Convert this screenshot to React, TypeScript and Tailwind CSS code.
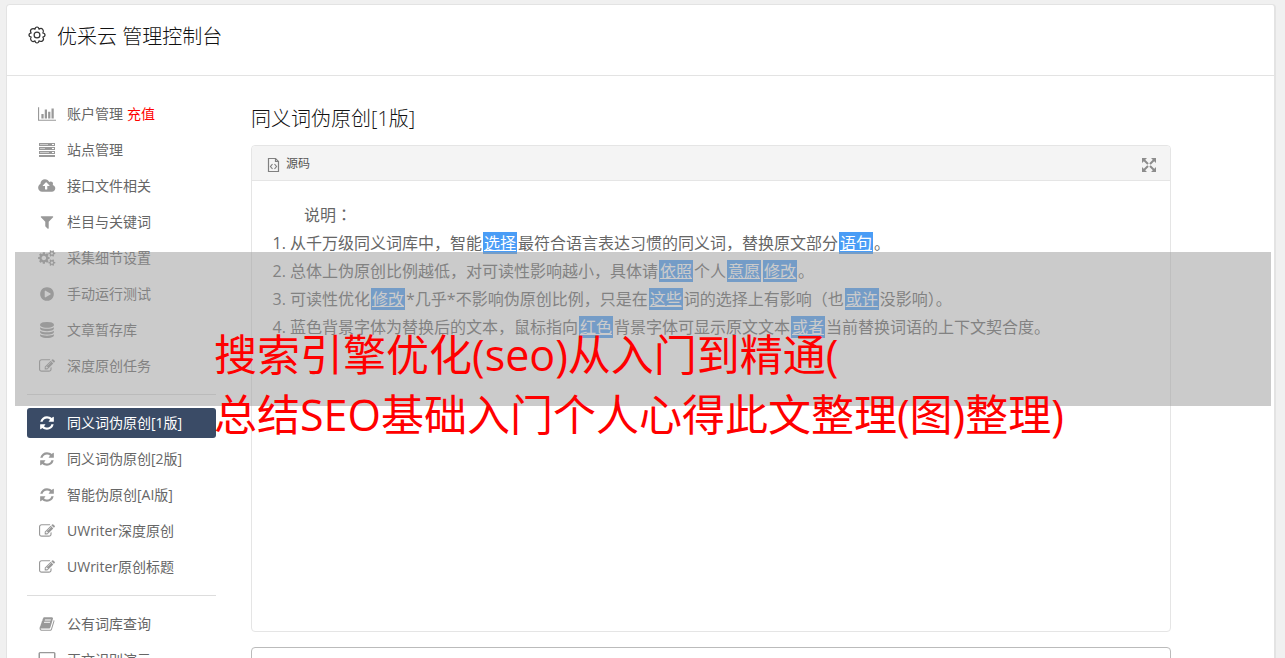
import type { ReactNode } from "react";
import clsx from "clsx";

type IconName =
  | "chart"
  | "server"
  | "upload"
  | "filter"
  | "cogs"
  | "play"
  | "database"
  | "edit"
  | "refresh"
  | "book"
  | "laptop";

const icons: Record<IconName, { box: string; width: string; path: string }> = {
  chart: {
    box: "0 0 2048 1792",
    width: "w-[18px]",
    path: "M640 896v512h-256v-512h256zm384-512v1024h-256v-1024h256zm1024 1152v128h-2048v-1536h128v1408h1920zm-640-896v768h-256v-768h256zm384-384v1152h-256v-1152h256z",
  },
  server: {
    box: "0 0 18 16",
    width: "w-[18px]",
    path: "M1 1h16v3H1zM1 5h16v3H1zM1 9h16v3H1zM1 13h16v2H1zM2 2.200v.6h8v-.6zM2 6.200v.6h5v-.6zM2 10.200v.6h9v-.6zM14 2v1h2V2zM14 6v1h2V6zM14 10v1h2v-1z",
  },
  upload: {
    box: "0 0 1856 1792",
    width: "w-[18px]",
    path: "M1216 864q0-14-9-23l-352-352q-9-9-23-9t-23 9l-351 351q-10 12-10 24 0 14 9 23t23 9h224v352q0 13 9.5 22.5t22.5 9.5h192q13 0 22.5-9.5t9.5-22.5v-352h224q13 0 22.5-9.5t9.5-22.5zm640 288q0 159-112.5 271.5t-271.5 112.5h-1088q-185 0-316.5-131.5t-131.5-316.5q0-130 70-240t188-165q-2-30-2-43 0-212 150-362t362-150q156 0 285.5 87t188.5 231q71-62 166-62 106 0 181 75t75 181q0 76-41 138 130 31 213.5 135.5t83.5 238.5z",
  },
  filter: {
    box: "0 0 1792 1792",
    width: "w-4",
    path: "M1595 295q17 41-14 70l-493 493v742q0 42-39 59-13 5-25 5-27 0-45-19l-256-256q-19-19-19-45v-486l-493-493q-31-29-14-70 17-39 59-39h1280q42 0 59 39z",
  },
  cogs: {
    box: "0 0 1856 1792",
    width: "w-[18px]",
    path: "M832 896q0-106-75-181t-181-75-181 75-75 181 75 181 181 75 181-75 75-181zm768 512q0-52-38-90t-90-38-90 38-38 90q0 53 37.5 90.5t90.5 37.5 90.5-37.5 37.5-90.5zm0-1024q0-52-38-90t-90-38-90 38-38 90q0 53 37.5 90.5t90.5 37.5 90.5-37.5 37.5-90.5zm-384 421v185q0 10-7 19.5t-16 10.5l-155 24q-11 35-32 76 34 48 90 115 7 11 7 20 0 12-7 19-23 30-82.5 89.5t-78.5 59.5q-11 0-21-7l-115-90q-37 19-77 31-11 108-23 155-7 24-30 24h-186q-11 0-20-7.5t-10-17.5l-23-153q-34-10-75-31l-118 89q-7 7-20 7-11 0-21-8-144-133-144-160 0-9 7-19 10-14 41-53t47-61q-23-44-35-82l-152-24q-10-1-17-9.5t-7-19.5v-185q0-10 7-19.5t16-10.5l155-24q11-35 32-76-34-48-90-115-7-11-7-20 0-12 7-20 22-30 82-89t79-59q11 0 21 7l115 90q34-18 77-32 11-108 23-154 7-24 30-24h186q11 0 20 7.5t10 17.5l23 153q34 10 75 31l118-89q8-7 20-7 11 0 21 8 144 133 144 160 0 8-7 19-12 16-42 54t-45 60q23 48 34 82l152 23q10 2 17 10.5t7 19.5zm640 533v140q0 16-149 31-12 27-30 52 51 113 51 138 0 4-4 7-122 71-124 71-8 0-46-47t-52-68q-20 2-30 2t-30-2q-14 21-52 68t-46 47q-2 0-124-71-4-3-4-7 0-25 51-138-18-25-30-52-149-15-149-31v-140q0-16 149-31 13-29 30-52-51-113-51-138 0-4 4-7 4-2 35-20t59-34 30-16q8 0 46 46.5t52 67.5q20-2 30-2t30 2q51-71 92-112l6-2q4 0 124 70 4 3 4 7 0 25-51 138 17 23 30 52 149 15 149 31zm0-1024v140q0 16-149 31-12 27-30 52 51 113 51 138 0 4-4 7-122 71-124 71-8 0-46-47t-52-68q-20 2-30 2t-30-2q-14 21-52 68t-46 47q-2 0-124-71-4-3-4-7 0-25 51-138-18-25-30-52-149-15-149-31v-140q0-16 149-31 13-29 30-52-51-113-51-138 0-4 4-7 4-2 35-20t59-34 30-16q8 0 46 46.5t52 67.5q20-2 30-2t30 2q51-71 92-112l6-2q4 0 124 70 4 3 4 7 0 25-51 138 17 23 30 52 149 15 149 31z",
  },
  play: {
    box: "0 0 1792 1792",
    width: "w-4",
    path: "M896 128q209 0 385.5 103t279.5 279.5 103 385.5-103 385.5-279.5 279.5-385.5 103-385.5-103-279.5-279.5-103-385.5 103-385.5 279.5-279.5 385.5-103zm384 823q32-18 32-55t-32-55l-544-320q-31-19-64-1-32 19-32 56v640q0 37 32 56 16 8 32 8 17 0 32-9z",
  },
  database: {
    box: "0 0 1792 1792",
    width: "w-4",
    path: "M896 768q237 0 443-43t325-127v170q0 69-103 128t-280 93.5-385 34.5-385-34.5-280-93.5-103-128v-170q119 84 325 127t443 43zm0 768q237 0 443-43t325-127v170q0 69-103 128t-280 93.5-385 34.5-385-34.5-280-93.5-103-128v-170q119 84 325 127t443 43zm0-384q237 0 443-43t325-127v170q0 69-103 128t-280 93.5-385 34.5-385-34.5-280-93.5-103-128v-170q119 84 325 127t443 43zm0-1152q208 0 385 34.5t280 93.5 103 128v128q0 69-103 128t-280 93.5-385 34.5-385-34.5-280-93.5-103-128v-128q0-69 103-128t280-93.5 385-34.5z",
  },
  edit: {
    box: "0 0 1792 1792",
    width: "w-4",
    path: "M888 1184l116-116-152-152-116 116v56h96v96h56zm440-720q-16-16-33 1l-350 350q-17 17-1 33t33-1l350-350q17-17 1-33zm80 594v190q0 119-84.5 203.5t-203.5 84.5h-832q-119 0-203.5-84.5t-84.5-203.5v-832q0-119 84.5-203.5t203.5-84.5h832q63 0 117 25 15 7 18 23 3 17-9 29l-49 49q-14 14-32 8-23-6-45-6h-832q-66 0-113 47t-47 113v832q0 66 47 113t113 47h832q66 0 113-47t47-113v-126q0-13 9-22l64-64q15-15 35-7t20 29zm-96-738l288 288-672 672h-288v-288zm444 132l-92 92-288-288 92-92q28-28 68-28t68 28l152 152q28 28 28 68t-28 68z",
  },
  refresh: {
    box: "0 0 1792 1792",
    width: "w-4",
    path: "M1639 1056q0 5-1 7-64 268-268 434.5t-478 166.5q-146 0-282.5-55t-243.5-157l-129 129q-19 19-45 19t-45-19-19-45v-448q0-26 19-45t45-19h448q26 0 45 19t19 45-19 45l-137 137q71 66 161 102t187 36q134 0 250-65t186-179q11-17 53-117 8-23 30-23h192q13 0 22.5 9.5t9.5 22.5zm25-800v448q0 26-19 45t-45 19h-448q-26 0-45-19t-19-45 19-45l138-138q-148-137-349-137-134 0-250 65t-186 179q-11 17-53 117-8 23-30 23h-199q-13 0-22.5-9.5t-9.5-22.5v-7q65-268 270-434.5t480-166.5q146 0 284 55.5t245 156.5l130-129q19-19 45-19t45 19 19 45z",
  },
  book: {
    box: "0 0 1792 1792",
    width: "w-4",
    path: "M1703 478q40 57 18 129l-275 906q-19 64-76.5 107.5t-122.5 43.5h-923q-77 0-148.5-53.5t-99.5-131.5q-24-67-2-127 0-4 3-27t4-37q1-8-3-21.5t-3-19.5q2-11 8-21t16.5-23.5 16.5-23.5q23-38 45-91.5t30-91.5q3-10 .5-30t-.5-28q3-11 17-28t17-23q21-36 42-92t25-90q1-9-2.5-32t.5-28q4-13 22-30.5t22-22.5q19-26 42.5-84.5t27.5-96.5q1-8-3-25.5t-2-26.5q2-8 9-18t18-23 17-21q8-12 16.5-30.5t15-35 16-36 19.5-32 26.5-23.5 36-11.5 47.5 5.5l-1 3q38-9 51-9h761q74 0 114 56t18 130l-274 906q-36 119-71.5 153.5t-128.5 34.5h-869q-27 0-38 15-11 16-1 43 24 70 144 70h923q29 0 56-15.5t35-41.5l300-987q7-22 5-57 38 15 59 43zm-1064 2q-4 13 2 22.5t20 9.5h608q13 0 25.5-9.5t16.5-22.5l21-64q4-13-2-22.5t-20-9.5h-608q-13 0-25.5 9.5t-16.5 22.5zm-83 256q-4 13 2 22.5t20 9.5h608q13 0 25.5-9.5t16.5-22.5l21-64q4-13-2-22.5t-20-9.5h-608q-13 0-25.5 9.5t-16.5 22.5z",
  },
  laptop: {
    box: "0 0 18 16",
    width: "w-[18px]",
    path: "M2 0h14a1.500 1.500 0 0 1 1.500 1.500v10a1.500 1.500 0 0 1-1.500 1.500H2A1.500 1.500 0 0 1 .5 11.500v-10A1.500 1.500 0 0 1 2 0zM2 1.200v10.600h14V1.200zM0 14h18v2H0z",
  },
};

type Item = { icon: IconName; label: string; extra?: string; active?: boolean };

const groups: Item[][] = [
  [
    { icon: "chart", label: "账户管理", extra: "充值" },
    { icon: "server", label: "站点管理" },
    { icon: "upload", label: "接口文件相关" },
    { icon: "filter", label: "栏目与关键词" },
    { icon: "cogs", label: "采集细节设置" },
    { icon: "play", label: "手动运行测试" },
    { icon: "database", label: "文章暂存库" },
    { icon: "edit", label: "深度原创任务" },
  ],
  [
    { icon: "refresh", label: "同义词伪原创[1版]", active: true },
    { icon: "refresh", label: "同义词伪原创[2版]" },
    { icon: "refresh", label: "智能伪原创[AI版]" },
    { icon: "edit", label: "UWriter深度原创" },
    { icon: "edit", label: "UWriter原创标题" },
  ],
  [
    { icon: "book", label: "公有词库查询" },
    { icon: "laptop", label: "正文识别演示" },
  ],
];

function MenuIcon({ name }: { name: IconName }) {
  const icon = icons[name];
  return (
    <svg viewBox={icon.box} className={clsx("h-4 shrink-0", icon.width)} fill="currentColor" fillRule="evenodd" aria-hidden="true">
      <path d={icon.path} />
    </svg>
  );
}

function Sidebar() {
  return (
    <nav className="w-[189px] shrink-0">
      {groups.map((group, index) => (
        <ul
          key={group[0].label}
          className={clsx("flex flex-col gap-1.5", index > 0 && "mt-[13px] border-t border-[#ddd] pt-[13px]")}
        >
          {group.map((item) => (
            <li key={item.label}>
              <a
                href="#"
                className={clsx(
                  "flex h-[30px] items-center rounded-[3px] pl-2.5 text-sm whitespace-nowrap",
                  item.active ? "bg-[#3a4b66] text-white" : "text-[#666]",
                )}
              >
                <span className={clsx("mr-2.5 flex w-5 justify-center", !item.active && "text-[#999]")}>
                  <MenuIcon name={item.icon} />
                </span>
                {item.label}
                {item.extra && <span className="ml-1 text-[#f00]">{item.extra}</span>}
              </a>
            </li>
          ))}
        </ul>
      ))}
    </nav>
  );
}

function Swap({ children }: { children: ReactNode }) {
  return (
    <a href="#" className="mx-px bg-[#4a9df6] px-px text-white underline">
      {children}
    </a>
  );
}

function SourcePanel() {
  return (
    <section className="min-h-[487px] rounded border border-[#e5e5e5]">
      <header className="flex h-[35px] items-center justify-between rounded-t border-b border-[#e5e5e5] bg-[#f4f4f4] px-3.5 text-xs text-[#555]">
        <span className="flex items-center gap-1.5">
          <svg viewBox="0 0 14 16" className="mt-1 h-4 w-3.5" fill="none" stroke="#808080" strokeWidth="1.2" aria-hidden="true">
            <path d="M2.500 1.500h7l3 3v10h-10z" />
            <path d="M9.500 1.500v3h3M6.500 7L4.500 9.500l2 2.500M8.500 7l2 2.500-2 2.500" />
          </svg>
          <span className="pt-px">源码</span>
        </span>
        <button type="button" aria-label="全屏" className="mt-1">
          <svg viewBox="0 0 14 14" className="size-3.5" fill="#8c8c8c" stroke="#8c8c8c" strokeWidth="2" aria-hidden="true">
            <path d="M2 2l4 4M12 2L8 6M2 12l4-4M12 12L8 8" />
            <path stroke="none" d="M0 0h5L0 5zM14 0v5L9 0zM0 14V9l5 5zM14 14H9l5-5z" />
          </svg>
        </button>
      </header>
      <div className="px-5 pt-[19px] text-base leading-7 text-[#666]">
        <p className="pl-8">
          说明<span className="font-['Noto_Sans_CJK_TC',sans-serif]" lang="zh-TW">：</span>
        </p>
        <ol className="list-decimal pl-[18px]">
          <li>
            从千万级同义词库中，智能<Swap>选择</Swap>最符合语言表达习惯的同义词，替换原文部分<Swap>语句</Swap>。
          </li>
          <li>
            总体上伪原创比例越低，对可读性影响越小，具体请<Swap>依照</Swap>个人<Swap>意愿</Swap>
            <Swap>修改</Swap>。
          </li>
          <li>
            可读性优化<Swap>修改</Swap>*几乎*不影响伪原创比例，只是在<Swap>这些</Swap>词的选择上有影响（也
            <Swap>或许</Swap>没影响）。
          </li>
          <li>
            蓝色背景字体为替换后的文本，鼠标指向<Swap>红色</Swap>背景字体可显示原文文本<Swap>或者</Swap>
            当前替换词语的上下文契合度。
          </li>
        </ol>
      </div>
    </section>
  );
}

function Caption() {
  return (
    <div className="pointer-events-none absolute top-[252px] right-[14px] left-[15px] h-[154px] bg-[#9b9b9b]/52">
      <p className="pt-[73px] pl-[199px] text-[43px] leading-[60px] whitespace-nowrap text-[#f00]">
        搜索引擎优化(seo)从入门到精通(
        <br />
        总结SEO基础入门个人心得此文整理(图)整理)
      </p>
    </div>
  );
}

export default function App() {
  return (
    <div
      lang="zh-CN"
      className="relative h-screen overflow-hidden bg-[#f0f0f0] pt-1 pr-[9px] pl-1.5 font-['Open_Sans','Noto_Sans_CJK_SC',sans-serif] text-[#333]"
    >
      <div className="min-h-full rounded-t border border-r-2 border-[#e3e3e3] bg-white">
        <header className="flex h-[71px] items-start gap-2.5 border-b border-[#e3e3e3] px-5 pt-4">
          <svg viewBox="0 0 20 20" className="mt-1 size-5" fill="none" stroke="#333" strokeWidth="1.2" aria-hidden="true">
            <path
              strokeLinejoin="round"
              d="M8 4.200Q8.200 2 10 2T12 4.200Q14.200 2.600 15.700 4.300T15.800 8Q18 8.200 18 10T15.800 12Q17.400 14.200 15.700 15.700T12 15.800Q11.800 18 10 18T8 15.800Q5.800 17.400 4.300 15.700T4.200 12Q2 11.800 2 10T4.200 8Q2.600 5.800 4.300 4.300T8 4.200z"
            />
            <circle cx="10" cy="10" r="2.900" />
          </svg>
          <h1 className="pt-px text-xl leading-[30px] font-light text-[#111]">优采云 管理控制台</h1>
        </header>
        <div className="flex gap-[35px] pt-[23px] pr-[103px] pl-5">
          <Sidebar />
          <main className="min-w-0 flex-1">
            <h2 className="mt-[5px] mb-[11px] text-xl leading-[30px] font-light text-[#111]">同义词伪原创[1版]</h2>
            <SourcePanel />
            <textarea aria-label="原文" className="mt-[15px] block h-40 w-full resize-none rounded border border-[#bbb]" />
          </main>
        </div>
      </div>
      <Caption />
    </div>
  );
}
